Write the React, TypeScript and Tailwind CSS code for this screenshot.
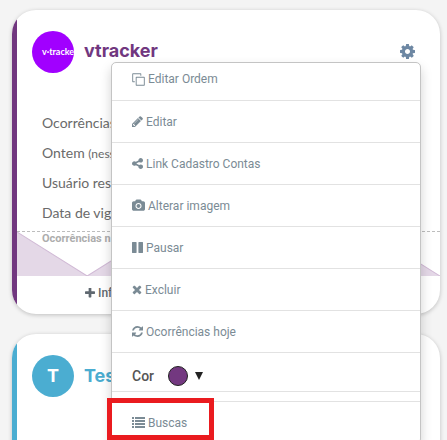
import type { ReactNode } from "react";

type IconProps = { path: string; viewBox?: string; className: string };

const icons = {
  cog: "M1152 896q0-106-75-181t-181-75-181 75-75 181 75 181 181 75 181-75 75-181zm512-109v222q0 12-8 23t-20 13l-185 28q-19 54-39 91 35 50 107 138 10 12 10 25t-9 23q-27 37-99 108t-94 71q-12 0-26-9l-138-108q-44 23-91 38-16 136-29 186-7 28-36 28h-222q-14 0-24.5-8.5t-11.5-21.5l-28-184q-49-16-90-37l-141 107q-10 9-25 9-14 0-25-11-126-114-165-168-7-10-7-23 0-12 8-23 15-21 51-66.5t54-70.5q-27-50-41-99l-183-27q-13-2-21-12.5t-8-23.5v-222q0-12 8-23t19-13l186-28q14-46 39-92-40-57-107-138-10-12-10-24 0-10 9-23 26-36 98.5-107.5t94.5-71.5q13 0 26 10l138 107q44-23 91-38 16-136 29-186 7-28 36-28h222q14 0 24.5 8.5t11.5 21.5l28 184q49 16 90 37l142-107q9-9 24-9 13 0 25 10 129 119 165 170 7 8 7 22 0 12-8 23-15 21-51 66.5t-54 70.5q26 50 41 98l183 28q13 2 21 12.5t8 23.5z",
  clone:
    "M1632 1632v-992h-992v992h992zm128-1024v1056q0 40-28 68t-68 28h-1056q-40 0-68-28t-28-68v-1056q0-40 28-68t68-28h1056q40 0 68 28t28 68zM1280 128v256h-128v-224h-992v992h224v128h-256q-40 0-68-28t-28-68v-1056q0-40 28-68t68-28h1056q40 0 68 28t28 68z",
  pencil:
    "M491 1536l91-91-235-235-91 91v107h128v128h107zm523-928q0-22-22-22-10 0-17 7l-542 542q-7 7-7 17 0 22 22 22 10 0 17-7l542-542q7-7 7-17zm-54-192l416 416-832 832h-416v-416zm683 96q0 53-37 90l-166 166-416-416 166-165q36-38 90-38 53 0 91 38l235 234q37 39 37 91z",
  share:
    "M1344 1024q133 0 226.500 93.500t93.500 226.500-93.500 226.500-226.500 93.500-226.500-93.500-93.500-226.500q0-12 2-34l-360-180q-92 86-218 86-133 0-226.500-93.500t-93.500-226.500 93.500-226.500 226.500-93.500q126 0 218 86l360-180q-2-22-2-34 0-133 93.500-226.500t226.500-93.500 226.500 93.500 93.500 226.500-93.500 226.500-226.500 93.500q-126 0-218-86l-360 180q2 22 2 34t-2 34l360 180q92-86 218-86z",
  camera:
    "M960 672q119 0 203.500 84.500t84.500 203.500-84.500 203.500-203.500 84.500-203.500-84.500-84.500-203.500 84.500-203.500 203.500-84.500zm704-416q106 0 181 75t75 181v896q0 106-75 181t-181 75h-1408q-106 0-181-75t-75-181v-896q0-106 75-181t181-75h224l51-136q19-49 69.500-84.500t103.500-35.500h512q53 0 103.500 35.500t69.500 84.500l51 136h224zm-704 1152q185 0 316.500-131.500t131.500-316.500-131.500-316.500-316.500-131.500-316.500 131.500-131.500 316.500 131.500 316.500 316.500 131.500z",
  pause:
    "M1664 192v1408q0 26-19 45t-45 19h-512q-26 0-45-19t-19-45v-1408q0-26 19-45t45-19h512q26 0 45 19t19 45zm-896 0v1408q0 26-19 45t-45 19h-512q-26 0-45-19t-19-45v-1408q0-26 19-45t45-19h512q26 0 45 19t19 45z",
  times:
    "M1490 1322q0 40-28 68l-136 136q-28 28-68 28t-68-28l-294-294-294 294q-28 28-68 28t-68-28l-136-136q-28-28-28-68t28-68l294-294-294-294q-28-28-28-68t28-68l136-136q28-28 68-28t68 28l294 294 294-294q28-28 68-28t68 28l136 136q28 28 28 68t-28 68l-294 294 294 294q28 28 28 68z",
  refresh:
    "M1639 1056q0 5-1 7-64 268-268 434.500t-478 166.500q-146 0-282.500-55t-243.500-157l-129 129q-19 19-45 19t-45-19-19-45v-448q0-26 19-45t45-19h448q26 0 45 19t19 45-19 45l-137 137q71 66 161 102t187 36q134 0 250-65t186-179q11-17 53-117 8-23 30-23h192q13 0 22.500 9.500t9.500 22.500zm25-800v448q0 26-19 45t-45 19h-448q-26 0-45-19t-19-45 19-45l138-138q-148-137-349-137-134 0-250 65t-186 179q-11 17-53 117-8 23-30 23h-199q-13 0-22.500-9.500t-9.500-22.500v-7q65-268 270-434.500t480-166.500q146 0 284 55.500t245 156.500l130-129q19-19 45-19t45 19 19 45z",
  plus: "M1600 736v192q0 40-28 68t-68 28h-416v416q0 40-28 68t-68 28h-192q-40 0-68-28t-28-68v-416h-416q-40 0-68-28t-28-68v-192q0-40 28-68t68-28h416v-416q0-40 28-68t68-28h192q40 0 68 28t28 68v416h416q40 0 68 28t28 68z",
  list: "M0 1h2v2H0zM3 1h10v2H3zM0 4h2v2H0zM3 4h10v2H3zM0 7h2v2H0zM3 7h10v2H3zM0 10h2v2H0zM3 10h10v2H3z",
};

function Icon({ path, viewBox = "128 0 1536 1792", className }: IconProps) {
  return (
    <svg viewBox={viewBox} fill="currentColor" className={className} aria-hidden="true">
      <path d={path} />
    </svg>
  );
}

const narrow = "h-[13px] w-[11px]";
const wide = "h-[13px] w-[13px]";

const actions = [
  { label: "Editar Ordem", path: icons.clone, viewBox: "0 0 1792 1792", size: wide },
  { label: "Editar", path: icons.pencil, size: narrow },
  { label: "Link Cadastro Contas", path: icons.share, size: narrow },
  { label: "Alterar imagem", path: icons.camera, viewBox: "0 0 1920 1792", size: wide },
  { label: "Pausar", path: icons.pause, size: narrow },
  { label: "Excluir", path: icons.times, viewBox: "208 0 1376 1792", size: "h-[13px] w-[10px]" },
  { label: "Ocorrências hoje", path: icons.refresh, size: narrow },
];

const itemClass =
  "flex w-full items-center gap-[3px] px-5 text-left text-xs text-[#7b8b95] hover:bg-gray-50";

function Menu() {
  return (
    <div className="absolute top-[52px] right-[19px] z-10 w-[310px] rounded-[5px] border border-[#c4c4c4] bg-white font-[Roboto,sans-serif] shadow-[0_6px_12px_rgba(0,0,0,0.18)]">
      <ul>
        {actions.map((action) => (
          <li key={action.label} className="group border-b border-[#e2e2e2]">
            <button
              type="button"
              className={`${itemClass} h-[41px] group-first:h-[37px] group-first:pb-[5px]`}
            >
              <Icon path={action.path} viewBox={action.viewBox} className={action.size} />
              {action.label}
            </button>
          </li>
        ))}
      </ul>
      <button
        type="button"
        className="flex h-[39px] w-full items-center border-b border-[#e2e2e2] px-5 pt-2 text-sm font-medium text-[#555]"
      >
        Cor
        <span className="ml-[14px] size-5 rounded-full border border-[#222] bg-[#733880]" />
        <svg viewBox="0 0 8 8" className="ml-[7px] size-2" fill="#222" aria-hidden="true">
          <path d="M0 0h8L4 8z" />
        </svg>
      </button>
      <div className="relative mt-[9px] border-t border-[#e2e2e2]">
        <button type="button" className={`${itemClass} h-[41px]`}>
          <Icon path={icons.list} viewBox="0 0 13 13" className={wide} />
          Buscas
        </button>
        <div className="pointer-events-none absolute -top-[4px] -left-[5px] h-[42px] w-[107px] border-[5px] border-[#ea1b1f]" />
      </div>
    </div>
  );
}

function Card({ stripe, children }: { stripe: string; children: ReactNode }) {
  return (
    <div className="flex overflow-hidden rounded-3xl bg-white shadow-[0_1px_4px_rgba(0,0,0,0.22)]">
      <div className={`w-[5px] shrink-0 ${stripe}`} />
      <div className="min-w-0 flex-1">{children}</div>
    </div>
  );
}

export default function App() {
  return (
    <main className="flex h-screen flex-col gap-5 overflow-hidden bg-[#f4f4f4] pt-[10px] pr-[7px] pl-3 font-[Lato,sans-serif]">
      <article className="relative z-10">
        <Card stripe="bg-[#71377f]">
          <header className="flex items-center gap-[10px] pt-[21px] pr-[25px] pl-[15px]">
            <div className="flex size-[42px] shrink-0 items-center overflow-hidden rounded-full bg-[#a100ff] pl-[10px] text-[9px] font-bold text-white">
              v·tracke
            </div>
            <h2 className="flex-1 pb-0.5 font-[Inter,sans-serif] text-lg font-bold text-[#71377f]">
              vtracker
            </h2>
            <button type="button" aria-label="Configurações" className="pb-0.5 text-[#6d87a3]">
              <Icon path={icons.cog} viewBox="128 128 1536 1536" className="size-[15px]" />
            </button>
          </header>
          <div className="mt-[35px] pb-[3px] pl-[25px] text-sm leading-[30px] text-[#6a6a6a]">
            <p>Ocorrências</p>
            <p>
              Ontem <small className="text-xs">(ness</small>
            </p>
            <p>Usuário res</p>
            <p>Data de vig</p>
          </div>
          <div className="relative border-t border-dashed border-[#bdbdbd]">
            <svg viewBox="0 0 422 44" preserveAspectRatio="none" className="block h-[44px] w-full">
              <path
                d="M0 0L70 44L140 0L211 44H281L352 0L422 44H0Z"
                fill="#e4d8e7"
              />
              <path
                d="M0 0L70 44L140 0L211 44H281L352 0L422 44"
                fill="none"
                stroke="#d0b9d5"
              />
            </svg>
            <span className="absolute top-0 left-[25px] font-[Roboto,sans-serif] text-[11px] leading-[14px] font-bold text-[#adadad]">
              Ocorrências n
            </span>
          </div>
          <footer className="px-[68px] pb-1">
            <a
              href="#info"
              className="flex h-[34px] items-center gap-[3px] font-[Roboto,sans-serif] text-xs font-medium text-[#5f6870]"
            >
              <Icon path={icons.plus} viewBox="192 192 1408 1408" className="size-[10px]" />
              Inf
            </a>
          </footer>
        </Card>
        <Menu />
      </article>
      <article>
        <Card stripe="bg-[#4badd1]">
          <header className="flex h-[304px] items-start gap-[10px] pt-[21px] pl-[15px]">
            <div className="flex size-[42px] shrink-0 items-center justify-center rounded-full bg-[#4badd1] font-[Inter,sans-serif] text-lg font-bold text-white">
              T
            </div>
            <h2 className="font-[Inter,sans-serif] text-lg leading-[42px] font-bold text-[#4badd1]">
              Tes
            </h2>
          </header>
        </Card>
      </article>
    </main>
  );
}
